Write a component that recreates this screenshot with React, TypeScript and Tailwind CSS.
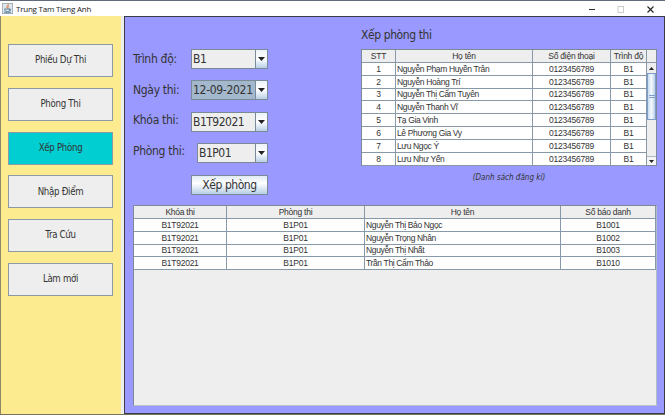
import type { ReactNode } from "react";

const tahoma = "font-['DejaVu_Sans_Condensed','DejaVu_Sans',sans-serif] [font-stretch:condensed]";
const arial = "font-['Liberation_Sans',sans-serif]";

const menu = ["Phiếu Dự Thi", "Phòng Thi", "Xếp Phòng", "Nhập Điểm", "Tra Cứu", "Làm mới"];

const registered = [
  "Nguyễn Phạm Huyền Trân",
  "Nguyễn Hoàng Trí",
  "Nguyễn Thị Cẩm Tuyên",
  "Nguyễn Thanh Vĩ",
  "Tạ Gia Vinh",
  "Lê Phương Gia Vy",
  "Lưu Ngọc Ý",
  "Lưu Như Yến",
];

const assigned = [
  ["Nguyễn Thị Bảo Ngọc", "B1001"],
  ["Nguyễn Trọng Nhân", "B1002"],
  ["Nguyễn Thị Nhất", "B1003"],
  ["Trần Thị Cẩm Thảo", "B1010"],
];

function JavaIcon() {
  return (
    <svg width="11" height="11" viewBox="0 0 22 22" className="ml-[2px] mr-[3px] shrink-0">
      <rect x="0.7" y="0.7" width="20.6" height="20.6" fill="#dfe6eb" stroke="#8f9ba5" strokeWidth="1.4" />
      <path d="M12 2c2 3-5 4-1 9M14 5c-3 2-3 3-1 6" fill="none" stroke="#dc7840" strokeWidth="2" />
      <path d="M5 12h10v3c0 3-8 3-9 0zM15 12c4-1 3 4-1 4M4 18c4 2 11 2 14 0" fill="none" stroke="#4c7898" strokeWidth="1.8" />
    </svg>
  );
}

function Combo({ value, selected, wide = true }: { value: string; selected?: boolean; wide?: boolean }) {
  return (
    <div className={`flex h-5 border border-[#7a8a99] ${wide ? "w-[77px]" : "w-[71px]"}`}>
      <div className={`flex min-w-0 flex-1 items-center whitespace-nowrap pl-px text-[12px] ${selected ? "bg-[#a3b8cc] tracking-[-0.3px]" : "bg-[#eeeeee] tracking-[-0.5px]"}`}>
        {value}
      </div>
      <div className="flex w-3 shrink-0 items-center justify-center border-l border-[#7a8a99] bg-linear-to-b from-[#edf3f9] via-white to-[#b8cfe5]">
        <svg width="7" height="4" viewBox="0 0 7 4"><path d="M0 0h7L3.5 4z" fill="#222" /></svg>
      </div>
    </div>
  );
}

function Field({ label, lift, children }: { label: string; lift?: string; children: ReactNode }) {
  return (
    <div className="flex h-5 w-[135px] items-center justify-between">
      <span className={`whitespace-nowrap text-[12px] tracking-[-0.3px] ${lift ?? ""}`}>{label}</span>
      {children}
    </div>
  );
}

function Row({ cols, cells, head, left }: { cols: string; cells: string[]; head?: boolean; left: number }) {
  return (
    <div className={`grid h-[12.85px] shrink-0 border-b border-[#8798a8] ${cols} ${head ? "bg-[#eeeeee]" : "bg-white"}`}>
      {cells.map((c, i) => (
        <div
          key={i}
          className={`flex items-center overflow-hidden whitespace-nowrap border-r border-[#8798a8] leading-[12px] ${i === left && !head ? "justify-start pl-px tracking-[-0.36px]" : "justify-center tracking-[-0.25px]"}`}
        >
          {c}
        </div>
      ))}
    </div>
  );
}

const topCols = "grid-cols-[34px_137px_78px_1fr]";
const bottomCols = "grid-cols-[93px_138px_196px_1fr]";

export default function App() {
  return (
    <div className={`flex h-[415px] w-[665px] flex-col overflow-hidden bg-white text-[#333333] ${tahoma}`}>
      <header className="flex h-4 shrink-0 items-center border-t border-[#626b7c] bg-white font-['Open_Sans',sans-serif] text-[8px] tracking-[-0.22px] text-[#1a1a1a] [font-stretch:normal]">
        <JavaIcon />
        <span className="flex-1">Trung Tam Tieng Anh</span>
        <svg width="80" height="14" viewBox="0 0 80 14" fill="none">
          <path d="M4 7.5h6" stroke="#333" />
          <rect x="33" y="4.5" width="5.5" height="6" stroke="#ccc" />
          <path d="M62.5 4.5l6 6m0-6l-6 6" stroke="#222" strokeWidth="1.1" />
        </svg>
      </header>
      <div className="flex min-h-0 flex-1 border-b border-[#77735c]">
        <nav className="flex w-[121px] shrink-0 flex-col gap-[10.8px] border-l border-[#8f8867] bg-[#fdeb8f] pl-[7px] pt-7">
          {menu.map((m) => (
            <button
              key={m}
              className={`h-[33px] w-[105px] shrink-0 border border-[#8c9aa6] text-[9.6px] tracking-[-0.3px] ${m === "Xếp Phòng" ? "bg-[#00ced1]" : "bg-[#eeeeee]"}`}
            >
              {m}
            </button>
          ))}
        </nav>
        <div className="w-[3px] shrink-0 bg-[#eeeeee]" />
        <main className="flex min-w-0 flex-1 flex-col border-b border-l border-r border-t border-[#3c3c48] bg-[#9999ff] pl-2 pr-[7px]">
          <div className="flex h-[188px] shrink-0 justify-between">
            <section className="flex flex-col gap-[11.4px] pt-8">
              <Field label="Trình độ:"><Combo value="B1" /></Field>
              <Field label="Ngày thi:"><Combo value="12-09-2021" selected /></Field>
              <Field label="Khóa thi:" lift="mb-[3px]"><Combo value="B1T92021" /></Field>
              <Field label="Phòng thi:" lift="mb-1"><Combo value="B1P01" wide={false} /></Field>
              <button className="ml-[58px] h-5 w-[77px] whitespace-nowrap border border-[#7a8a99] bg-linear-to-b from-[#e0eaf4] via-white via-40% to-[#b8cfe5] text-[12px] tracking-[-0.45px]">
                Xếp phòng
              </button>
            </section>
            <section className="flex w-[296px] flex-col">
              <h1 className="h-8 whitespace-nowrap pt-[10px] text-[12px] leading-[16px] tracking-[-0.4px]">Xếp phòng thi</h1>
              <div className={`flex h-[117px] border border-[#7a8a99] bg-[#eeeeee] text-[8.5px] ${arial}`}>
                <div className="flex w-[285px] flex-col">
                  <Row head cols={topCols} cells={["STT", "Họ tên", "Số điện thoại", "Trình độ"]} left={1} />
                  {registered.map((n, i) => (
                    <Row key={n} cols={topCols} cells={[String(i + 1), n, "0123456789", "B1"]} left={1} />
                  ))}
                </div>
                <div className="flex flex-1 flex-col">
                  <div className="h-[13px] border-b border-[#8798a8]" />
                  <div className="flex h-[10px] items-center justify-center">
                    <svg width="5" height="3" viewBox="0 0 5 3"><path d="M0 3h5L2.5 0z" fill="#222" /></svg>
                  </div>
                  <div className="flex h-[47px] flex-col items-center justify-center gap-px border border-[#7f9dcb] bg-linear-to-r from-[#c8ddf2] via-[#f4f9ff] to-[#b8cfe5]">
                    <i className="h-px w-[6px] bg-[#7f9dcb]" />
                    <i className="h-px w-[6px] bg-[#7f9dcb]" />
                  </div>
                  <div className="flex-1" />
                  <div className="flex h-[9px] items-center justify-center border-t border-[#b0b8c0] bg-[#f5f5f5]">
                    <svg width="5" height="3" viewBox="0 0 5 3"><path d="M0 0h5L2.5 3z" fill="#222" /></svg>
                  </div>
                </div>
              </div>
              <p className="pt-[6px] text-center text-[8px] italic leading-[12px]">(Danh sách đăng kí)</p>
            </section>
          </div>
          <section className={`flex h-[201px] shrink-0 flex-col border border-[#7a8a99] border-b-[#b8c4c8] border-r-[#b0bdc5] bg-[#eeeeee] text-[8.5px] ${arial}`}>
            <Row head cols={bottomCols} cells={["Khóa thi", "Phòng thi", "Họ tên", "Số báo danh"]} left={2} />
            {assigned.map(([n, id]) => (
              <Row key={id} cols={bottomCols} cells={["B1T92021", "B1P01", n, id]} left={2} />
            ))}
          </section>
        </main>
      </div>
    </div>
  );
}
